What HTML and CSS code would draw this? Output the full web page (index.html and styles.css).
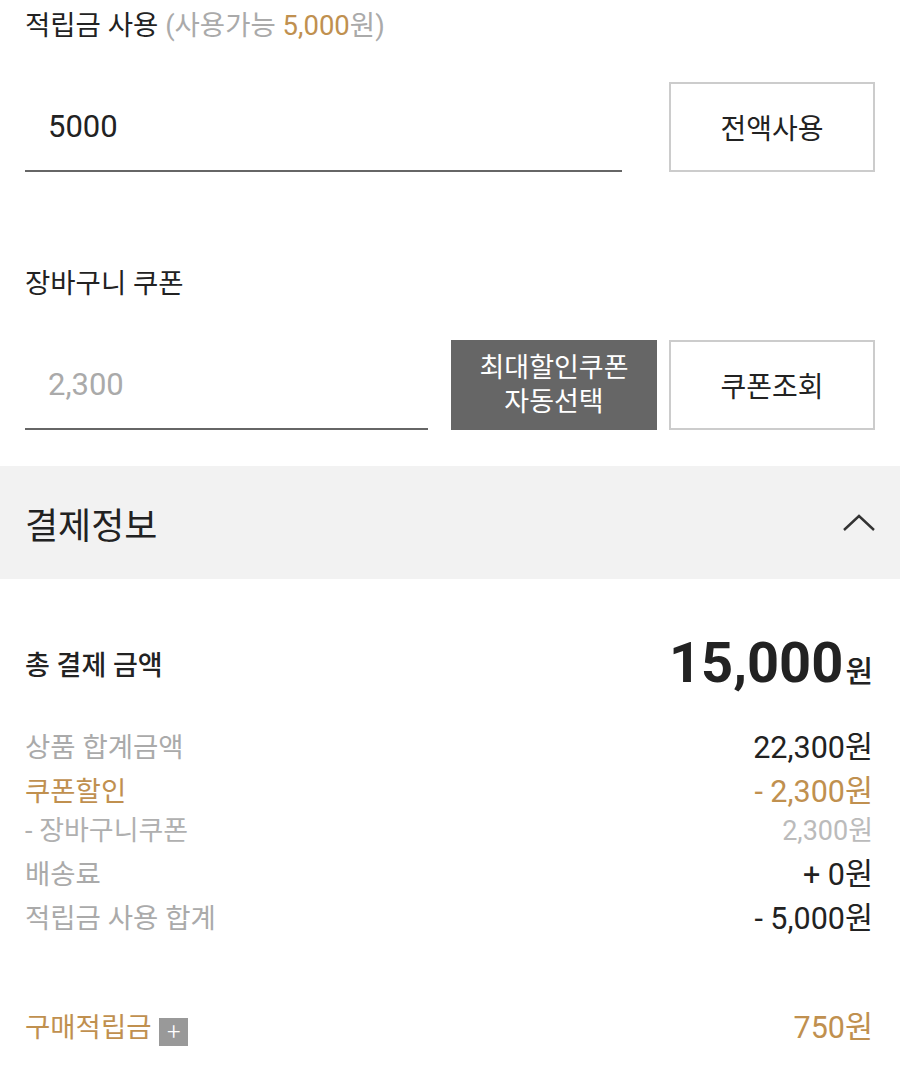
FILE: index.html
```html
<!DOCTYPE html>
<html lang="ko">
<head>
    <meta charset="UTF-8">
    <meta name="viewport" content="width=device-width, initial-scale=1.0">
    <title>주문서 - 결제정보</title>
    <link rel="stylesheet" href="styles.css">
</head>
<body>

    <div class="benefit">
        <h3 class="field-title">적립금 사용 <span class="sub">(사용가능 <em>5,000</em>원)</span></h3>
        <div class="field-row">
            <div class="input-box">
                <input type="text" id="point" value="5000">
            </div>
            <button class="btn-line">전액사용</button>
        </div>

        <h3 class="field-title coupon-title">장바구니 쿠폰</h3>
        <div class="field-row coupon-row">
            <div class="input-box">
                <input type="text" id="coupon" placeholder="2,300">
            </div>
            <button class="btn-dark">최대할인쿠폰<br>자동선택</button>
            <button class="btn-line">쿠폰조회</button>
        </div>
    </div>

    <div class="section-head">
        <h2>결제정보</h2>
        <svg class="chevron" width="34" height="20" viewBox="0 0 34 20">
            <path d="M2 17 L17 3 L32 17" fill="none" stroke="#333" stroke-width="2.4"/>
        </svg>
    </div>

    <div class="pay-info">
        <div class="total">
            <span class="total-label">총 결제 금액</span>
            <span class="total-price">15,000<small>원</small></span>
        </div>

        <ul class="detail">
            <li><span>상품 합계금액</span><b>22,300원</b></li>
            <li class="gold"><span>쿠폰할인</span><b>- 2,300원</b></li>
            <li class="sub-item"><span>- 장바구니쿠폰</span><b>2,300원</b></li>
            <li><span>배송료</span><b>+ 0원</b></li>
            <li><span>적립금 사용 합계</span><b>- 5,000원</b></li>
        </ul>

        <div class="reward">
            <span>구매적립금 <i class="plus">+</i></span>
            <b>750원</b>
        </div>
    </div>

</body>
</html>
```

FILE: styles.css
```css
body {
    margin: 0;
    font-family: Roboto, "Noto Sans CJK KR", sans-serif;
    color: #222;
    background: #fff;
}
.benefit {
    padding: 8px 25px 0;
}
.field-title {
    margin: 0;
    font-size: 27.5px;
    font-weight: normal;
    line-height: 36px;
}
.field-title .sub {
    color: #aaa;
}
.field-title em {
    font-style: normal;
    color: #c0904f;
}
.coupon-title {
    margin-top: 94px;
}
.field-row {
    display: flex;
    margin-top: 38px;
    height: 90px;
}
.input-box {
    flex: 1;
    display: flex;
    align-items: center;
    border-bottom: 2px solid #666;
    margin-right: 47px;
}
.coupon-row {
    margin-top: 38px;
}
.coupon-row .input-box {
    margin-right: 23px;
}
input {
    width: 100%;
    border: none;
    outline: none;
    padding: 0 0 0 23px;
    font-family: Roboto, "Noto Sans CJK KR", sans-serif;
    font-size: 31px;
    color: #222;
    background: transparent;
}
input::placeholder {
    color: #aaa;
}
button {
    width: 206px;
    height: 90px;
    padding: 0;
    font-family: Roboto, "Noto Sans CJK KR", sans-serif;
    font-size: 28px;
    cursor: pointer;
}
.btn-line {
    background: #fff;
    border: 2px solid #ccc;
    color: #222;
}
.btn-dark {
    background: #666;
    border: none;
    color: #fff;
    font-size: 27px;
    line-height: 34px;
    margin-right: 12px;
}
.section-head {
    display: flex;
    justify-content: space-between;
    align-items: center;
    height: 113px;
    margin-top: 36px;
    padding: 0 25px;
    background: #f2f2f2;
}
.section-head h2 {
    margin: 0;
    font-size: 36px;
    font-weight: normal;
}
.chevron {
    margin-right: -1px;
}
.pay-info {
    padding: 0 27px 0 25px;
}
.total {
    display: flex;
    justify-content: space-between;
    align-items: center;
    height: 84px;
    margin-top: 42px;
}
.total-label {
    font-size: 27px;
    font-weight: 500;
}
.total-price {
    font-size: 56px;
    font-weight: bold;
}
.total-price small {
    font-size: 30px;
    font-weight: 500;
    margin-left: 2px;
}
.detail {
    list-style: none;
    margin: 18px 0 0;
    padding: 0;
}
.detail li {
    display: flex;
    justify-content: space-between;
    align-items: center;
    height: 44px;
    font-size: 27.5px;
    color: #aaa;
}
.detail li b {
    font-weight: normal;
    font-size: 30.5px;
    color: #222;
}
.detail li.gold,
.detail li.gold b {
    color: #c0904f;
}
.detail li.sub-item {
    height: 34px;
    margin-bottom: 5px;
    font-size: 27px;
    color: #b0b0b0;
}
.detail li.sub-item b {
    font-size: 27px;
    color: #bbb;
}
.reward {
    display: flex;
    justify-content: space-between;
    align-items: center;
    height: 44px;
    margin-top: 65px;
    font-size: 27.5px;
    color: #c0904f;
}
.reward b {
    font-weight: normal;
    font-size: 30.5px;
}
.plus {
    display: inline-flex;
    align-items: center;
    justify-content: center;
    width: 29px;
    height: 28px;
    margin-left: 1px;
    background: #999;
    color: #fff;
    font-style: normal;
    font-size: 24px;
    font-weight: 300;
    vertical-align: -3px;
}
```
